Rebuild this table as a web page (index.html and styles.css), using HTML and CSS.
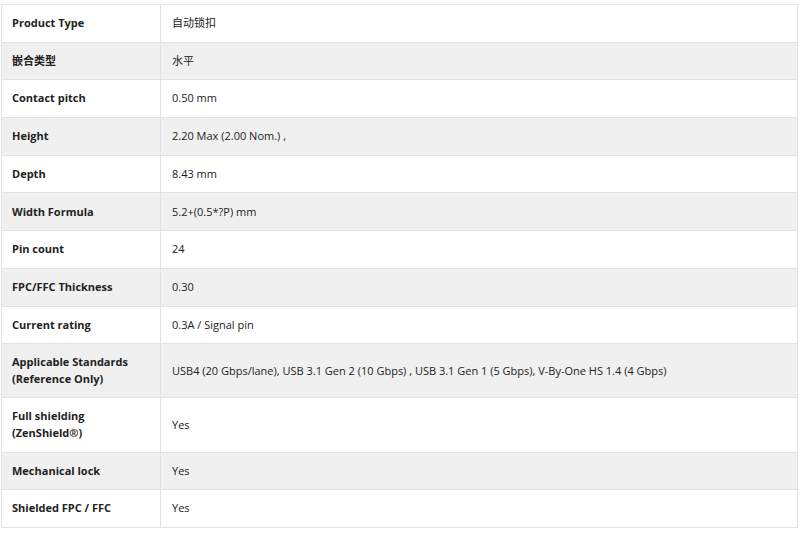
FILE: index.html
```html
<!DOCTYPE html>
<html>
<head>
<meta charset="utf-8">
<link rel="stylesheet" href="styles.css">
</head>
<body>
<table class="spec">
<tbody>
<tr><th>Product Type</th><td>自动锁扣</td></tr>
<tr><th>嵌合类型</th><td>水平</td></tr>
<tr><th>Contact pitch</th><td>0.50 mm</td></tr>
<tr><th>Height</th><td>2.20 Max (2.00 Nom.) ,</td></tr>
<tr><th>Depth</th><td>8.43 mm</td></tr>
<tr><th>Width Formula</th><td>5.2+(0.5*?P) mm</td></tr>
<tr><th>Pin count</th><td>24</td></tr>
<tr><th>FPC/FFC Thickness</th><td>0.30</td></tr>
<tr><th>Current rating</th><td>0.3A / Signal pin</td></tr>
<tr><th>Applicable Standards<br>(Reference Only)</th><td>USB4 (20 Gbps/lane), USB 3.1 Gen 2 (10 Gbps) , USB 3.1 Gen 1 (5 Gbps), V-By-One HS 1.4 (4 Gbps)</td></tr>
<tr><th>Full shielding<br>(ZenShield®)</th><td>Yes</td></tr>
<tr><th>Mechanical lock</th><td>Yes</td></tr>
<tr><th>Shielded FPC / FFC</th><td>Yes</td></tr>
</tbody>
</table>
</body>
</html>
```

FILE: styles.css
```css
html, body {
  margin: 0;
  padding: 0;
  background: #ffffff;
}
body {
  padding: 4px 0 0 1px;
  font-family: "Open Sans", "Noto Sans CJK SC", sans-serif;
  font-size: 11px;
  color: #222222;
}
.spec {
  border-collapse: collapse;
  width: 797px;
}
.spec th,
.spec td {
  border: 1px solid #e2e2e2;
  padding: 10.1px 10px;
  line-height: 16.5px;
  text-align: left;
  vertical-align: middle;
}
.spec th {
  width: 138px;
  font-weight: 700;
}
.spec td {
  font-weight: 400;
  padding-left: 11px;
}
.spec tr:nth-child(even) th,
.spec tr:nth-child(even) td {
  background: #f0f0f0;
}
```
